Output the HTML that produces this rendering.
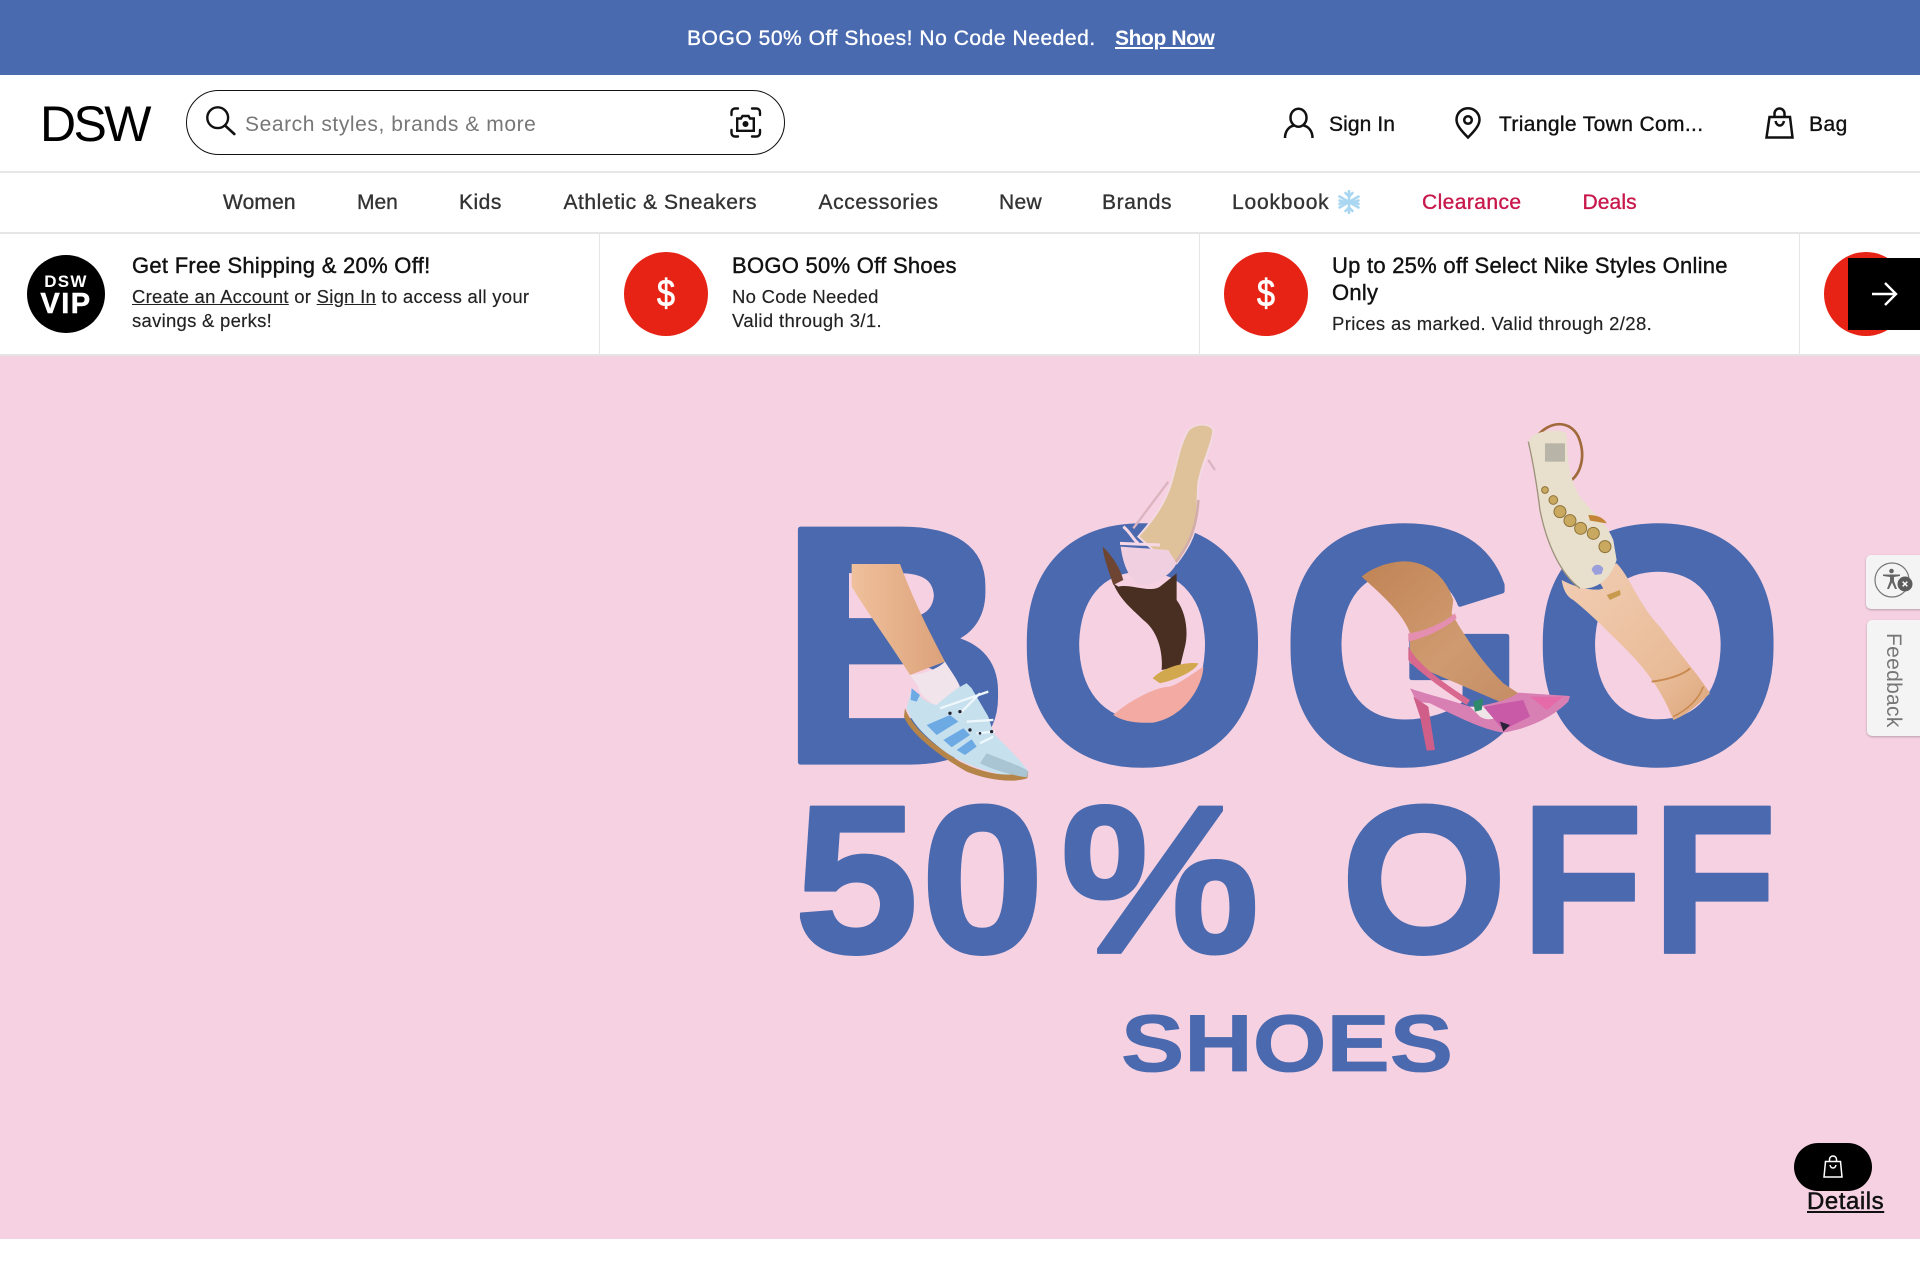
<!DOCTYPE html>
<html lang="en"><head><meta charset="utf-8"><title>DSW</title>
<style>
html,body{margin:0;padding:0;background:#fff}
body{width:1920px;height:1280px;position:relative;overflow:hidden;font-family:"Liberation Sans",Arial,sans-serif;color:#111}
.t{position:absolute;white-space:nowrap;line-height:24px;-webkit-text-stroke:.35px currentColor}
.nav{font-size:21px;top:190.5px;color:#333}
.hd{font-size:21px;top:112.5px;color:#111}
.ti{font-size:22px;color:#111;-webkit-text-stroke:.4px currentColor}
.sb{font-size:18.5px;letter-spacing:.27px;color:#222;-webkit-text-stroke:.15px currentColor}
.abs{position:absolute}
.dol{position:absolute;width:84px;height:84px;top:252px;border-radius:50%;background:#e62315}
.dol span{display:block;color:#fff;text-align:center;line-height:84px;font-size:38px;-webkit-text-stroke:.8px #fff;transform:scaleX(.85)}
.big{font-family:"Liberation Sans",Arial,sans-serif;font-weight:700;fill:#4a69ae;stroke:#4a69ae;stroke-linejoin:round}
</style></head><body>

<div class="abs" style="left:0;top:0;width:1920px;height:75px;background:#4a6ab0"></div>
<div class="t" style="left:687px;top:27px;font-size:21px;letter-spacing:.55px;color:#fff">BOGO 50% Off Shoes! No Code Needed.</div>
<div class="t" style="left:1115px;top:27px;font-size:21px;letter-spacing:-.4px;color:#fff;font-weight:700;-webkit-text-stroke:0;text-decoration:underline">Shop Now</div>

<div class="t" style="left:40px;top:99px;line-height:50px;font-size:50px;letter-spacing:-2.6px;color:#000;-webkit-text-stroke:0">DSW</div>

<div class="abs" style="left:186px;top:90px;width:597px;height:63px;border:1.7px solid #111;border-radius:33px;background:#fff"></div>
<svg class="abs" style="left:0;top:0" width="1920" height="180" fill="none" stroke="#111">
<circle cx="217.7" cy="117.7" r="10.4" stroke-width="2.4"/><path d="M225 125.5L234.3 134" stroke-width="2.6" stroke-linecap="round"/>
<g stroke-width="2.4" stroke-linecap="round">
<path d="M731.5 115v-3a3.5 3.5 0 0 1 3.5-3.5h3M752 108.500h4.500a3.500 3.500 0 0 1 3.500 3.500v3M731.500 130v3a3.500 3.500 0 0 0 3.500 3.500h3M752 136.500h4.500a3.500 3.500 0 0 0 3.500-3.500v-3"/>
<path d="M737.200 118.500h3.800l1.500-2.500h6l1.500 2.500h3.800v12.300h-16.600z"/></g>
<circle cx="745.500" cy="124" r="3" fill="#111" stroke="none"/>
<g stroke-width="2.500">
<ellipse cx="1298.500" cy="117.700" rx="8" ry="9"/>
<path d="M1285 138c0-7 4-11.500 9-12.500M1312.500 138c0-7-4-11.500-9-12.500"/>
<path d="M1468 137.500c-6-6-11.500-12-11.500-17.800a11.500 11.500 0 0 1 23 0c0 5.800-5.500 11.800-11.500 17.800z"/><circle cx="1468" cy="120" r="3.800"/>
<path d="M1769.500 117h20.500l2.500 20.500h-26z"/><path d="M1774.500 117v-3.500a5 5 0 0 1 10 0v3.500"/><path d="M1775.500 121c1.500 6 7 6 8.500 0"/>
</g></svg>
<div class="t" style="left:245px;top:112.5px;font-size:21px;letter-spacing:.57px;color:#777;-webkit-text-stroke:0">Search styles, brands &amp; more</div>
<div class="t hd" style="left:1329px;letter-spacing:.1px">Sign In</div>
<div class="t hd" style="left:1499px;letter-spacing:.36px">Triangle Town Com...</div>
<div class="t hd" style="left:1809px;letter-spacing:.5px">Bag</div>

<div class="abs" style="left:0;top:171px;width:1920px;height:2px;background:#e6e6e6"></div>

<div class="t nav" style="left:223px;letter-spacing:.15px">Women</div>
<div class="t nav" style="left:357px">Men</div>
<div class="t nav" style="left:459px;letter-spacing:.5px">Kids</div>
<div class="t nav" style="left:563.500px;letter-spacing:.54px">Athletic &amp; Sneakers</div>
<div class="t nav" style="left:818.500px;letter-spacing:.63px">Accessories</div>
<div class="t nav" style="left:999px;letter-spacing:.3px">New</div>
<div class="t nav" style="left:1102px;letter-spacing:.6px">Brands</div>
<div class="t nav" style="left:1232px;letter-spacing:.8px">Lookbook</div>
<svg class="abs" style="left:1337px;top:190px" width="24" height="24" fill="none" stroke="#a9d7f2" stroke-width="2.600" stroke-linecap="round"><path d="M12 1v22M2.500 6.500l19 11M21.500 6.500l-19 11M8.500 3L12 6.500 15.500 3M8.500 21L12 17.500 15.500 21M2.500 10.500L7 12l-4.500 2M21.500 10.500L17 12l4.500 2"/></svg>
<div class="t nav" style="left:1422px;letter-spacing:.42px;color:#c8174b">Clearance</div>
<div class="t nav" style="left:1582.500px;letter-spacing:.1px;color:#c8174b">Deals</div>

<div class="abs" style="left:0;top:232px;width:1920px;height:2px;background:#e6e6e6"></div>
<div class="abs" style="left:0;top:354px;width:1920px;height:2px;background:#e4e4e4"></div>
<div class="abs" style="left:598.500px;top:234px;width:1.500px;height:120px;background:#e6e6e6"></div>
<div class="abs" style="left:1198.500px;top:234px;width:1.500px;height:120px;background:#e6e6e6"></div>
<div class="abs" style="left:1798.500px;top:234px;width:1.500px;height:120px;background:#e6e6e6"></div>

<div class="abs" style="left:27px;top:255px;width:78px;height:78px;border-radius:50%;background:#000"></div>
<div class="abs" style="left:27px;top:272px;width:78px;text-align:center;color:#fff;font-weight:700;font-size:17px;line-height:20px;letter-spacing:1.300px">DSW</div>
<div class="abs" style="left:27px;top:289px;width:78px;text-align:center;color:#fff;font-weight:700;font-size:29px;line-height:30px;letter-spacing:1.500px;-webkit-text-stroke:.5px #fff">VIP</div>

<div class="t ti" style="left:132px;top:254px;letter-spacing:.28px">Get Free Shipping &amp; 20% Off!</div>
<div class="t sb" style="left:132px;top:285px"><u>Create an Account</u> or <u>Sign In</u> to access all your</div>
<div class="t sb" style="left:132px;top:309px">savings &amp; perks!</div>

<div class="dol" style="left:624px"><span>$</span></div>
<div class="t ti" style="left:732px;top:254px;letter-spacing:.28px">BOGO 50% Off Shoes</div>
<div class="t sb" style="left:732px;top:285px">No Code Needed</div>
<div class="t sb" style="left:732px;top:309px;letter-spacing:.35px">Valid through 3/1.</div>

<div class="dol" style="left:1224px"><span>$</span></div>
<div class="t ti" style="left:1332px;top:254px;letter-spacing:.25px">Up to 25% off Select Nike Styles Online</div>
<div class="t ti" style="left:1332px;top:281px;letter-spacing:.25px">Only</div>
<div class="t sb" style="left:1332px;top:312px;letter-spacing:.35px">Prices as marked. Valid through 2/28.</div>

<div class="dol" style="left:1824px"><span>$</span></div>
<div class="abs" style="left:1848px;top:258px;width:72px;height:72px;background:#000"></div>
<svg class="abs" style="left:1848px;top:258px" width="72" height="72" fill="none" stroke="#fff" stroke-width="2.400"><path d="M24 36h24M37 25l11 11-11 11"/></svg>

<!-- hero -->
<svg class="abs" style="left:0;top:356px" width="1920" height="883" viewBox="0 356 1920 883">
<defs>
<linearGradient id="leg1" x1="0" y1="0" x2="1" y2="0"><stop offset="0" stop-color="#efc09c"/><stop offset="1" stop-color="#dca27a"/></linearGradient>
<linearGradient id="leg2" x1="0" y1="0" x2="1" y2="1"><stop offset="0" stop-color="#c08455"/><stop offset=".6" stop-color="#d09a70"/><stop offset="1" stop-color="#c48d64"/></linearGradient>
<linearGradient id="arm" x1="0" y1="0" x2="1" y2="1"><stop offset="0" stop-color="#f2cdb4"/><stop offset=".7" stop-color="#e9bc98"/><stop offset="1" stop-color="#dca67c"/></linearGradient>
<filter id="sf"><feGaussianBlur stdDeviation=".5"/></filter>
<filter id="d3" x="-5%" y="-10%" width="110%" height="120%" color-interpolation-filters="sRGB"><feMorphology operator="dilate" radius="0.01 3"/></filter>
<filter id="d2" x="-5%" y="-10%" width="110%" height="120%" color-interpolation-filters="sRGB"><feMorphology operator="dilate" radius="0.01 2"/></filter>
</defs>
<rect x="0" y="356" width="1920" height="883" fill="#f6d1e2"/>
<g class="big" font-size="320" stroke-width="5" filter="url(#d3)">
<text transform="translate(779 759) scale(1 1.03)">B</text>
<text transform="translate(1016 759) scale(1.017 1.03)">O</text>
<text transform="translate(1280 759) scale(.99 1.03)">G</text>
<text transform="translate(1532 759) scale(1.015 1.03)">O</text>
</g>
<g class="big" font-size="225" stroke-width="2" filter="url(#d2)">
<text transform="translate(0 951) scale(1 .92)" x="794 920 1060">50%</text>
<text transform="translate(1340 951) scale(.96 .92)">O</text>
<text transform="translate(1520 951) scale(.9 .92)">F</text>
<text transform="translate(1651 951) scale(.92 .92)">F</text>
</g>
<g class="big" font-size="95" stroke-width="1">
<text transform="translate(0 1071) scale(1 .85)" x="1121" textLength="332" lengthAdjust="spacingAndGlyphs">SHOES</text>
</g>

<g transform="translate(780 400) scale(.3333)" filter="url(#sf)">
 <path d="M215 492H360C400 600 450 700 495 785L390 825C330 730 270 650 215 560Z" fill="url(#leg1)"/>
 <path d="M390 825C420 825 470 810 495 785C510 810 530 835 540 860L470 920C440 900 415 880 415 860Z" fill="#f1e4ea"/>
 <path d="M395 865C420 890 440 910 470 915C500 890 520 870 560 850L575 865L625 950L640 1000C690 1050 730 1090 745 1115L740 1135L690 1130C620 1115 560 1095 500 1060C450 1020 400 980 380 925Z" fill="#c7e0ee"/>
 <path d="M375 925C400 990 470 1040 540 1085C610 1120 680 1135 745 1115L742 1135C700 1150 620 1140 560 1115C480 1070 390 1000 372 950Z" fill="#b4844a"/>
 <path d="M440 975L510 945L535 965L470 1005Z M490 1020L550 985L570 1005L515 1042Z M530 1050L575 1018L590 1040L555 1065Z" fill="#6daae4"/>
 <path d="M395 865L420 885L410 905L392 900Z" fill="#6daae4"/>
 <path d="M620 1060C680 1085 730 1100 745 1115L740 1132C690 1125 640 1110 600 1090Z" fill="#a9c4d2"/>
 <g stroke="#eef7fb" stroke-width="7" fill="none"><path d="M480 925L625 875M540 940L600 880M560 965L640 960M590 1000L645 995M600 1030L640 1010"/></g>
 <g fill="#223"><circle cx="510" cy="940" r="5"/><circle cx="540" cy="935" r="5"/><circle cx="570" cy="990" r="5"/><circle cx="600" cy="1000" r="4"/><circle cx="635" cy="995" r="5"/></g>
 <path d="M1225 90C1250 65 1300 70 1300 95C1295 140 1265 190 1255 250L1250 360C1245 410 1220 450 1190 490L1120 450L1075 410C1110 370 1150 320 1170 260C1190 200 1195 140 1225 90Z" fill="#e0c29a" stroke="#f3d9e2" stroke-width="6"/>
 <path d="M1060 385L1165 245M1285 180L1305 210" stroke="#dcb4c0" stroke-width="7" fill="none"/>
 <path d="M1255 300C1250 400 1215 450 1185 490" stroke="#d3adaa" stroke-width="8" fill="none"/>
 <path d="M1015 560C1050 550 1110 580 1140 560L1190 520L1190 600C1220 640 1225 700 1215 740L1200 800L1145 810C1150 750 1130 690 1090 660C1060 630 1020 600 1000 550Z" fill="#4a2e22"/>
 <path d="M968 440C990 460 1020 500 1030 540L1000 555C985 510 970 470 968 440Z" fill="#6e4533"/>
 <path d="M1022 440L1165 450L1190 490C1170 530 1120 555 1080 555C1050 540 1030 500 1022 440Z" fill="#f0cfe0"/>
 <path d="M1030 380C1050 395 1060 420 1075 430M1020 430L1140 435" stroke="#f6d8e6" stroke-width="9" fill="none"/>
 <path d="M1118 835C1150 800 1220 785 1255 790C1250 810 1190 840 1140 850Z" fill="#d2a850"/>
 <path d="M1000 945C1050 900 1130 860 1170 860C1200 850 1240 820 1270 800C1270 850 1220 950 1120 968C1070 970 1030 965 1000 945Z" fill="#f2aaa2"/>
</g>

<g transform="translate(1270 400) scale(.3333)" filter="url(#sf)">
 <path d="M275 530C310 500 370 480 420 485C490 495 530 540 550 600L545 640C590 720 640 790 700 850L745 880C730 900 720 910 700 910L560 850L420 790V700C400 640 330 580 275 530Z" fill="url(#leg2)"/>
 <path d="M415 740C440 790 520 850 600 900L590 915C520 870 440 810 415 780Z" fill="#d9678f"/>
 <path d="M420 865C460 880 540 900 600 920C640 920 720 900 745 878L900 888L895 905C850 950 780 985 700 998C640 990 560 950 480 910L440 905Z" fill="#d880b4"/>
 <path d="M600 920C640 925 690 905 720 915C700 950 660 970 630 950Z" fill="#efe4e8"/>
 <path d="M640 920L760 900L780 950L700 990Z" fill="#c85aa8"/>
 <path d="M610 905L640 895L635 930L615 935Z" fill="#2f8a6a"/>
 <path d="M690 965L720 975L700 995Z" fill="#2b2338"/>
 <path d="M780 890L880 890L830 930Z" fill="#e46aa8"/>
 <path d="M430 890L475 920L495 1050L470 1052L450 950Z" fill="#cf5f88"/>
 <path d="M415 700C460 695 520 670 555 640L560 655C520 690 460 715 415 725Z" fill="#e58fb0"/>
 <path d="M875 540C920 565 980 575 1000 565L965 510C970 490 990 490 1000 505L1040 490C1080 530 1110 620 1170 680C1220 750 1290 830 1320 880C1280 920 1240 950 1210 960C1180 880 1130 810 1070 750C1020 700 960 640 910 600C890 590 880 570 875 540Z" fill="url(#arm)"/>
 <path d="M800 110C840 60 900 60 925 110C950 170 930 220 905 240" fill="none" stroke="#a06a3a" stroke-width="8"/>
 <path d="M775 125C790 90 860 85 890 100C890 180 900 240 930 290C970 340 1010 370 1030 420L1040 480C1020 540 980 570 930 565C870 520 830 430 810 330C800 250 790 190 775 125Z" fill="#e8e0cc"/>
 <path d="M775 125C790 190 800 250 810 330C830 430 870 520 930 565" fill="none" stroke="#9d937c" stroke-width="4"/>
 <rect x="825" y="130" width="60" height="55" fill="#b8b5a8"/>
 <g fill="#c9a860" stroke="#8d7238" stroke-width="3"><circle cx="825" cy="270" r="10"/><circle cx="850" cy="300" r="13"/><circle cx="870" cy="335" r="18"/><circle cx="900" cy="362" r="18"/><circle cx="932" cy="385" r="18"/><circle cx="970" cy="400" r="18"/><circle cx="1005" cy="440" r="18"/></g>
 <path d="M955 345C975 345 1000 350 1010 370L960 362Z" fill="#c48437"/>
 <path d="M965 510C970 490 990 490 1000 505L995 522L975 525Z" fill="#9a9fdc"/>
 <path d="M1010 585L1050 570L1052 585L1020 600Z" fill="#c79a4e"/>
 <path d="M1145 845C1190 840 1240 825 1260 805" fill="none" stroke="#c98a50" stroke-width="6"/>
 <path d="M1210 950C1250 930 1285 900 1300 860" fill="none" stroke="#c98a50" stroke-width="5"/>
</g>
</svg>

<!-- side widgets -->
<div class="abs" style="left:1866px;top:555px;width:60px;height:54px;background:#f4f4f4;border-radius:5px;box-shadow:0 1px 2px rgba(0,0,0,.25)"></div>
<svg class="abs" style="left:1866px;top:555px" width="54" height="54" fill="#666">
<circle cx="26" cy="25" r="17" fill="none" stroke="#777" stroke-width="1.200"/>
<circle cx="25.500" cy="16" r="2.300"/><path d="M17 19.500h17v1.500l-6 1v4l3 8h-2l-3-6.500-3 6.500h-2l3-8v-4l-7-1z"/>
<circle cx="39" cy="29" r="7.500" fill="#5c5c5c"/><path d="M36.700 26.700l4.600 4.600M41.300 26.700l-4.600 4.600" stroke="#fff" stroke-width="1.500"/></svg>
<div class="abs" style="left:1867px;top:620px;width:60px;height:116px;background:#f4f4f4;border-radius:5px;box-shadow:0 1px 2px rgba(0,0,0,.25)"></div>
<div class="abs" style="left:1881px;top:633px;width:24px;height:96px;color:#777;font-size:21px;letter-spacing:.3px;line-height:24px;writing-mode:vertical-rl;white-space:nowrap">Feedback</div>

<div class="abs" style="left:1794px;top:1143px;width:78px;height:48px;background:#000;border-radius:24px"></div>
<svg class="abs" style="left:1821px;top:1154px" width="24" height="26" fill="none" stroke="#fff" stroke-width="1.500"><path d="M4.500 7.500h15l1.500 15.500h-18z"/><path d="M8.500 7.500v-2a3.500 3.500 0 0 1 7 0v2"/><path d="M9 11c1 4 5 4 6 0"/></svg>
<div class="t" style="left:1807px;top:1190px;font-size:24px;letter-spacing:.55px;color:#111;text-decoration:underline;-webkit-text-stroke:.5px #111">Details</div>
</body></html>
